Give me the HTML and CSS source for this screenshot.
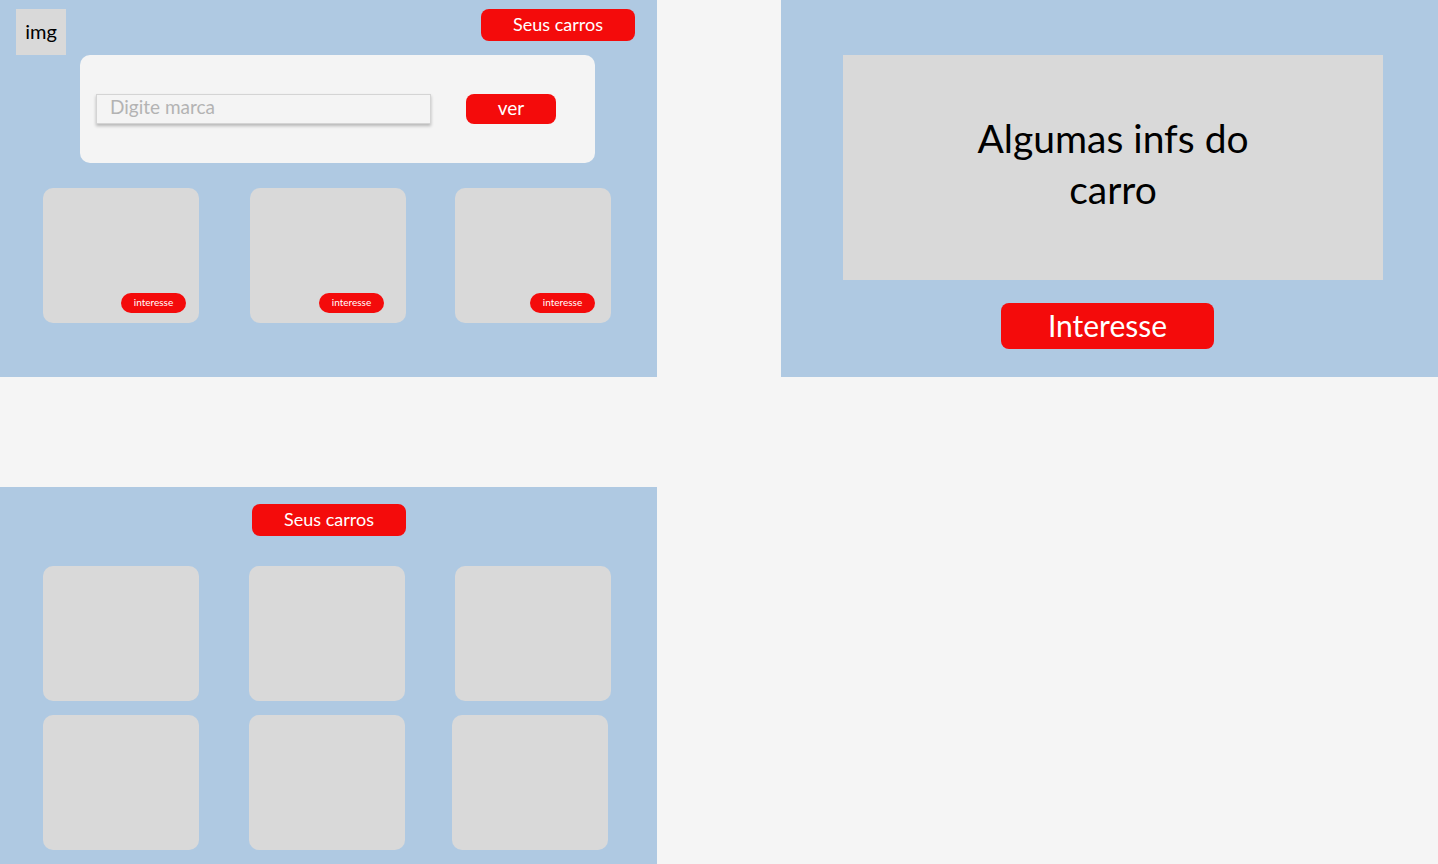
FILE: index.html
```html
<!DOCTYPE html>
<html lang="pt-BR">
<head>
<meta charset="utf-8">
<title>Carros</title>
<link rel="stylesheet" href="styles.css">
</head>
<body>
<div class="board">
  <section class="frame frame-search">
    <div class="topbar">
      <div class="logo">img</div>
      <button class="btn btn-top">Seus carros</button>
    </div>
    <div class="search-card">
      <div class="search-input">Digite marca</div>
      <button class="btn btn-ver">ver</button>
    </div>
    <div class="cards-row">
      <div class="car-card c1"><span class="pill">interesse</span></div>
      <div class="car-card c2"><span class="pill">interesse</span></div>
      <div class="car-card c3"><span class="pill">interesse</span></div>
    </div>
  </section>

  <div class="spacer"></div>

  <section class="frame frame-detail">
    <div class="info-box">Algumas infs do<br>carro</div>
    <button class="btn btn-big">Interesse</button>
  </section>

  <section class="frame frame-mine">
    <button class="btn btn-mine">Seus carros</button>
    <div class="grid">
      <div class="car-card"></div>
      <div class="car-card"></div>
      <div class="car-card"></div>
      <div class="car-card"></div>
      <div class="car-card"></div>
      <div class="car-card shift"></div>
    </div>
  </section>
</div>
</body>
</html>
```

FILE: styles.css
```css
* { box-sizing: border-box; }
html, body { margin: 0; padding: 0; }
body {
  background: #f5f5f5;
  font-family: Lato, "Open Sans", sans-serif;
  width: 1438px;
  height: 864px;
  overflow: hidden;
}
.board {
  display: grid;
  grid-template-columns: 657px 124px 657px;
  grid-template-rows: 377px 110px 377px;
}
.frame { background: #afc9e2; }
.frame-search { grid-column: 1; grid-row: 1; padding: 9px 22px 0 16px; }
.spacer { grid-column: 2; grid-row: 1; }
.frame-detail {
  grid-column: 3; grid-row: 1;
  display: flex; flex-direction: column; align-items: flex-start;
  padding: 55px 0 0 62px;
}
.frame-mine {
  grid-column: 1; grid-row: 3;
  display: flex; flex-direction: column; align-items: flex-start;
  padding: 17px 0 0 43px;
}

.btn {
  border: none;
  background: #f40b0b;
  color: #fff;
  font-family: inherit;
  cursor: pointer;
  padding: 0 0 2px 0;
}

.topbar { display: flex; justify-content: space-between; align-items: flex-start; height: 46px; }
.logo {
  width: 50px; height: 46px;
  background: #d9d9d9;
  display: flex; align-items: center; justify-content: center;
  font-size: 20px; color: #000;
  padding-bottom: 3px;
}
.btn-top { width: 154px; height: 32px; border-radius: 8px; font-size: 18px; }

.search-card {
  margin-left: 64px;
  width: 515px; height: 108px;
  background: #f4f4f4;
  border-radius: 10px;
  display: flex; align-items: center;
  padding: 0 0 0 16px;
}
.search-input {
  width: 335px; height: 30px;
  border: 1px solid #d4d4d4;
  background: #f4f4f4;
  box-shadow: 0 2px 3px rgba(0,0,0,0.25);
  color: #b3b3b3;
  font-size: 19px;
  line-height: 24px;
  padding-left: 13px;
}
.btn-ver { margin-left: 35px; width: 90px; height: 30px; border-radius: 8px; font-size: 19px; padding-bottom: 3px; }

.cards-row {
  display: flex;
  gap: 51px;
  margin: 25px 0 0 27px;
}
.cards-row .c3 { margin-left: -2px; }
.car-card {
  width: 156px; height: 135px;
  background: #d9d9d9;
  border-radius: 10px;
}
.cards-row .car-card {
  display: flex; align-items: flex-end; justify-content: flex-end;
  padding: 0 13px 10px 0;
}
.cards-row .c2 { padding-right: 22px; }
.cards-row .c3 { padding-right: 16px; }
.pill {
  width: 65px; height: 20px;
  border-radius: 10px;
  background: #f40b0b;
  color: #fff;
  font-size: 10px;
  display: flex; align-items: center; justify-content: center;
  padding-bottom: 2px;
}

.info-box {
  width: 540px; height: 225px;
  background: #d9d9d9;
  color: #000;
  font-size: 39px;
  line-height: 51px;
  text-align: center;
  display: flex; align-items: center; justify-content: center;
  padding-bottom: 8px;
}
.btn-big {
  margin: 23px 0 0 158px;
  width: 213px; height: 46px; border-radius: 8px;
  font-size: 30px;
  padding-bottom: 3px;
}

.btn-mine { margin-left: 209px; width: 154px; height: 32px; border-radius: 8px; font-size: 18px; padding-bottom: 3px; }
.grid {
  display: grid;
  grid-template-columns: repeat(3, 156px);
  column-gap: 50px;
  row-gap: 14px;
  margin-top: 30px;
}
.grid .shift { margin-left: -3px; }
```
